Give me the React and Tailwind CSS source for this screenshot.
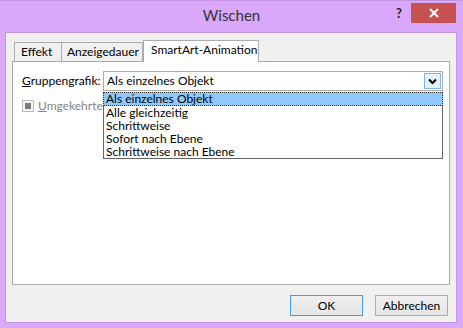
import React from 'react';

const items = ['Als einzelnes Objekt', 'Alle gleichzeitig', 'Schrittweise', 'Sofort nach Ebene', 'Schrittweise nach Ebene'];

export default function App() {
    return (
        <div className="w-[463px] h-[328px] bg-[#d9a8fb] flex flex-col text-[12px] text-black overflow-hidden" style={{ fontFamily: '"Segoe UI", Lato, "Noto Sans", sans-serif' }}>
            {/* Titelleiste */}
            <div className="h-[32px] shrink-0 border-t border-[#c495e4] grid grid-cols-[1fr_auto_1fr]">
                <div />
                <div className="pt-[3px] text-[15px] text-[#333] leading-[22px]">Wischen</div>
                <div className="flex justify-end items-start">
                    <span className="mt-[4px] mr-[9px] text-[13px] font-bold text-[#222] leading-[16px]">?</span>
                    <div className="mt-[2px] mr-[7px] w-[45px] h-[20px] bg-[#c75050] flex items-center justify-center">
                        <svg width="10" height="10" viewBox="0 0 10 10">
                            <path d="M1 1 L9 9 M9 1 L1 9" stroke="#fff" strokeWidth="2" />
                        </svg>
                    </div>
                </div>
            </div>

            {/* Client-Bereich */}
            <div className="ml-[5px] mr-[6px] mb-[5px] flex-1 bg-[#f0f0f0] border border-[#c495e4] flex flex-col pt-[7px] px-[6px]">
                {/* Tabs */}
                <div className="flex items-end pl-[2px] h-[21px] relative z-10">
                    <div className="h-[19px] w-[48px] pl-[6px] border border-b-0 border-[#acacac] bg-[#f0f0f0] leading-[17px]">Effekt</div>
                    <div className="h-[19px] w-[81px] pl-[5px] border border-b-0 border-l-0 border-[#acacac] bg-[#f0f0f0] leading-[17px]">Anzeigedauer</div>
                    <div className="h-[22px] w-[116px] pl-[7px] border border-b-0 border-[#acacac] bg-white leading-[18px] -mb-px">SmartArt-Animation</div>
                </div>

                {/* Tab-Inhalt */}
                <div className="h-[224px] bg-white border border-[#acacac] px-[9px] pt-[9px] pr-[6px]">
                    <div className="flex items-center gap-[3px]">
                        <span className="w-[78px]"><span className="underline">G</span>ruppengrafik:</span>
                        <div className="relative flex-1">
                            <div className="h-[20px] border border-[#acacac] bg-white flex items-center pl-[3px] pr-[1px]">
                                <span className="flex-1">Als einzelnes Objekt</span>
                                <div className="w-[17px] h-[16px] bg-[#e5f1fb] border border-[#7eb4ea] flex items-center justify-center">
                                    <svg width="9" height="7" viewBox="0 0 9 7">
                                        <path d="M1 1.5 L4.5 5 L8 1.5" stroke="#000" strokeWidth="2" fill="none" />
                                    </svg>
                                </div>
                            </div>
                            {/* aufgeklappte Liste */}
                            <div className="absolute left-0 right-0 top-[21px] bg-white border border-[#646464] z-20">
                                {items.map((it, i) => (
                                    <div
                                        key={it}
                                        className={i === 0
                                            ? 'h-[14px] leading-[12px] pl-[2px] bg-[#90c8fb] border border-dotted border-[#333] -mx-px -mt-px'
                                            : 'h-[13px] leading-[13px] pl-[2px]'}
                                    >
                                        {it}
                                    </div>
                                ))}
                            </div>
                        </div>
                    </div>

                    <div className="flex items-center gap-[4px] mt-[6px] text-[#838383]">
                        <div className="w-[12px] h-[12px] border border-[#bcbcbc] bg-[#f4f4f4] flex items-center justify-center">
                            <div className="w-[6px] h-[6px] bg-[#7a7a7a]" />
                        </div>
                        <span><span className="underline">U</span>mgekehrte</span>
                    </div>
                </div>

                {/* Buttons */}
                <div className="flex justify-end gap-[12px] mt-[10px] pr-[2px]">
                    <button className="w-[73px] h-[21px] border border-[#3c9cf0] bg-gradient-to-b from-[#f0f0f0] to-[#e5e5e5] leading-[19px]">OK</button>
                    <button className="w-[73px] h-[21px] border border-[#acacac] bg-gradient-to-b from-[#f0f0f0] to-[#e5e5e5] leading-[19px]">Abbrechen</button>
                </div>
            </div>
        </div>
    );
}
